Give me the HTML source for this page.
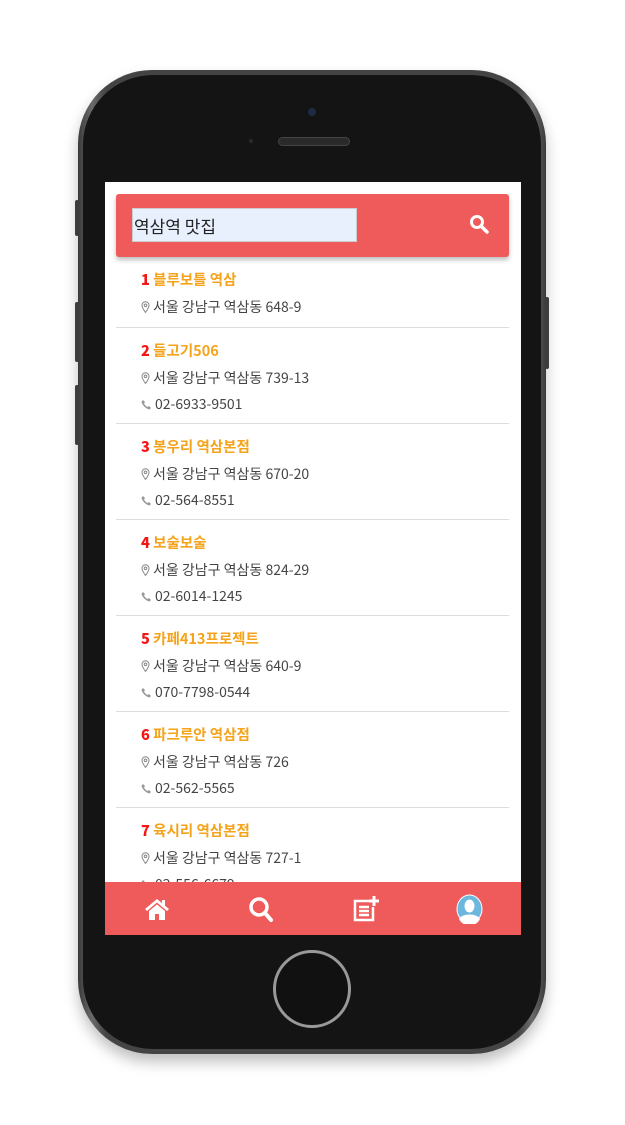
<!DOCTYPE html>
<html><head><meta charset="utf-8"><style>
*{margin:0;padding:0;box-sizing:border-box}
body{width:625px;height:1125px;background:#fff;position:relative;overflow:hidden;font-family:"Noto Sans CJK KR","Liberation Sans",sans-serif}
.phone{position:absolute;left:78px;top:70px;width:468px;height:984px;border-radius:74px;background:linear-gradient(90deg,#3a3a3a,#6a6a6a 3%,#444 6%,#444 94%,#6a6a6a 97%,#3a3a3a);box-shadow:0 8px 14px rgba(0,0,0,.25)}
.inner{position:absolute;left:5px;top:5px;right:5px;bottom:5px;border-radius:70px;background:#141414}
.btn{position:absolute;background:#444;width:4px;border-radius:2px}
.screen{position:absolute;left:105px;top:182px;width:416px;height:753px;background:#fff;overflow:hidden}
.hdr{position:absolute;left:11px;top:12px;width:393px;height:63px;background:#ef5b5b;border-radius:3px;box-shadow:0 3px 5px rgba(0,0,0,.25)}
.inp{position:absolute;left:16px;top:14px;width:225px;height:34px;background:#e8f0fe;border:1px solid #ccc;font-size:17px;color:#222;line-height:34px;padding-left:1px}
.list{position:absolute;left:11px;top:75px;width:393px}
.item{border-bottom:1px solid #ddd;padding:11px 0 0 25px;height:96px;background:#fff}
.item.first{height:71px}
.t{font-size:14.5px;font-weight:bold;color:#f5a31a;height:26px;line-height:24px}
.t b{color:#f31616}
.l{font-size:14px;color:#444;height:26px;display:flex;align-items:center}
.l svg{margin-right:3px}
.nav{position:absolute;left:0;top:700px;width:416px;height:53px;background:#ef5b5b}
.nav svg{position:absolute}
.home{position:absolute;left:273px;top:950px;width:78px;height:78px;border-radius:50%;border:3px solid #999;background:#111}
</style></head><body>
<div class="btn" style="left:75px;top:200px;height:36px"></div>
<div class="btn" style="left:75px;top:302px;height:60px"></div>
<div class="btn" style="left:75px;top:385px;height:60px"></div>
<div class="btn" style="left:545px;top:297px;height:72px"></div>
<div class="phone"><div class="inner"></div></div>
<div style="position:absolute;left:308px;top:108px;width:8px;height:8px;border-radius:50%;background:#1f2a44"></div>
<div style="position:absolute;left:278px;top:137px;width:72px;height:9px;border-radius:5px;background:#2a2a2a;border:1px solid #444"></div>
<div style="position:absolute;left:249px;top:139px;width:4px;height:4px;border-radius:50%;background:#2a2a2a"></div>
<div class="home"></div>
<div class="screen">
 <div class="list">
  <div class="item first"><div class="t"><b>1</b> 블루보틀 역삼</div><div class="l"><svg width="9" height="12" viewBox="0 0 9 12"><path d="M4.5 11.5C2 8 1 6 1 4.3a3.5 3.5 0 0 1 7 0C8 6 7 8 4.5 11.5z" fill="none" stroke="#888"/><circle cx="4.5" cy="4.3" r="1.3" fill="none" stroke="#888"/></svg>서울 강남구 역삼동 648-9</div></div>
  <div class="item"><div class="t"><b>2</b> 들고기506</div><div class="l"><svg width="9" height="12" viewBox="0 0 9 12"><path d="M4.5 11.5C2 8 1 6 1 4.3a3.5 3.5 0 0 1 7 0C8 6 7 8 4.5 11.5z" fill="none" stroke="#888"/><circle cx="4.5" cy="4.3" r="1.3" fill="none" stroke="#888"/></svg>서울 강남구 역삼동 739-13</div><div class="l"><svg width="11" height="11" viewBox="0 0 11 11"><path d="M2 1l2 2-1 1.5c.8 1.5 2 2.7 3.5 3.5L8 7l2 2-1.5 1.5C5 10 1 6 .5 2.5z" fill="#999"/></svg>02-6933-9501</div></div>
  <div class="item"><div class="t"><b>3</b> 봉우리 역삼본점</div><div class="l"><svg width="9" height="12" viewBox="0 0 9 12"><path d="M4.5 11.5C2 8 1 6 1 4.3a3.5 3.5 0 0 1 7 0C8 6 7 8 4.5 11.5z" fill="none" stroke="#888"/><circle cx="4.5" cy="4.3" r="1.3" fill="none" stroke="#888"/></svg>서울 강남구 역삼동 670-20</div><div class="l"><svg width="11" height="11" viewBox="0 0 11 11"><path d="M2 1l2 2-1 1.5c.8 1.5 2 2.7 3.5 3.5L8 7l2 2-1.5 1.5C5 10 1 6 .5 2.5z" fill="#999"/></svg>02-564-8551</div></div>
  <div class="item"><div class="t"><b>4</b> 보술보술</div><div class="l"><svg width="9" height="12" viewBox="0 0 9 12"><path d="M4.5 11.5C2 8 1 6 1 4.3a3.5 3.5 0 0 1 7 0C8 6 7 8 4.5 11.5z" fill="none" stroke="#888"/><circle cx="4.5" cy="4.3" r="1.3" fill="none" stroke="#888"/></svg>서울 강남구 역삼동 824-29</div><div class="l"><svg width="11" height="11" viewBox="0 0 11 11"><path d="M2 1l2 2-1 1.5c.8 1.5 2 2.7 3.5 3.5L8 7l2 2-1.5 1.5C5 10 1 6 .5 2.5z" fill="#999"/></svg>02-6014-1245</div></div>
  <div class="item"><div class="t"><b>5</b> 카페413프로젝트</div><div class="l"><svg width="9" height="12" viewBox="0 0 9 12"><path d="M4.5 11.5C2 8 1 6 1 4.3a3.5 3.5 0 0 1 7 0C8 6 7 8 4.5 11.5z" fill="none" stroke="#888"/><circle cx="4.5" cy="4.3" r="1.3" fill="none" stroke="#888"/></svg>서울 강남구 역삼동 640-9</div><div class="l"><svg width="11" height="11" viewBox="0 0 11 11"><path d="M2 1l2 2-1 1.5c.8 1.5 2 2.7 3.5 3.5L8 7l2 2-1.5 1.5C5 10 1 6 .5 2.5z" fill="#999"/></svg>070-7798-0544</div></div>
  <div class="item"><div class="t"><b>6</b> 파크루안 역삼점</div><div class="l"><svg width="9" height="12" viewBox="0 0 9 12"><path d="M4.5 11.5C2 8 1 6 1 4.3a3.5 3.5 0 0 1 7 0C8 6 7 8 4.5 11.5z" fill="none" stroke="#888"/><circle cx="4.5" cy="4.3" r="1.3" fill="none" stroke="#888"/></svg>서울 강남구 역삼동 726</div><div class="l"><svg width="11" height="11" viewBox="0 0 11 11"><path d="M2 1l2 2-1 1.5c.8 1.5 2 2.7 3.5 3.5L8 7l2 2-1.5 1.5C5 10 1 6 .5 2.5z" fill="#999"/></svg>02-562-5565</div></div>
  <div class="item"><div class="t"><b>7</b> 육시리 역삼본점</div><div class="l"><svg width="9" height="12" viewBox="0 0 9 12"><path d="M4.5 11.5C2 8 1 6 1 4.3a3.5 3.5 0 0 1 7 0C8 6 7 8 4.5 11.5z" fill="none" stroke="#888"/><circle cx="4.5" cy="4.3" r="1.3" fill="none" stroke="#888"/></svg>서울 강남구 역삼동 727-1</div><div class="l"><svg width="11" height="11" viewBox="0 0 11 11"><path d="M2 1l2 2-1 1.5c.8 1.5 2 2.7 3.5 3.5L8 7l2 2-1.5 1.5C5 10 1 6 .5 2.5z" fill="#999"/></svg>02-556-6679</div></div>
 </div>
 <div class="hdr"><div class="inp">역삼역 맛집</div>
  <svg style="position:absolute;left:353px;top:20px" width="20" height="20" viewBox="0 0 20 20"><circle cx="8" cy="8" r="5.5" fill="none" stroke="#fff" stroke-width="3"/><path d="M12 12l6 6" stroke="#fff" stroke-width="3.5" stroke-linecap="round"/></svg></div>
 <div class="nav">
  <svg style="left:39px;top:15px" width="26" height="24" viewBox="0 0 26 24"><path d="M13 2L1 12l2 2 10-8.5L23 14l2-2-4-3.3V3h-3v3.2z" fill="#fff"/><path d="M5 14l8-6.5 8 6.5v9h-6v-6h-4v6H5z" fill="#fff"/></svg>
  <svg style="left:143px;top:14px" width="26" height="27" viewBox="0 0 26 27"><circle cx="11" cy="11" r="8" fill="none" stroke="#fff" stroke-width="3.5"/><path d="M17 17l6 7" stroke="#fff" stroke-width="4" stroke-linecap="round"/></svg>
  <svg style="left:248px;top:14px" width="26" height="26" viewBox="0 0 26 26"><path d="M16 5H2v19h18V11" fill="none" stroke="#fff" stroke-width="2.5"/><path d="M6 11h10M6 15h10M6 19h10" stroke="#fff" stroke-width="2.5"/><path d="M21 0v10M16 5h10" stroke="#fff" stroke-width="3"/></svg>
  <svg style="left:351px;top:12px" width="27" height="30" viewBox="0 0 27 30"><ellipse cx="13.5" cy="15" rx="13" ry="14.5" fill="#fff"/><ellipse cx="13.5" cy="15" rx="12" ry="13.5" fill="#6bb7de"/><ellipse cx="13.5" cy="12" rx="5" ry="6.5" fill="#fff"/><path d="M3 25c3-6 18-6 21 0a12 13 0 0 1-21 0z" fill="#fff"/></svg>
 </div>
</div>
</body></html>
